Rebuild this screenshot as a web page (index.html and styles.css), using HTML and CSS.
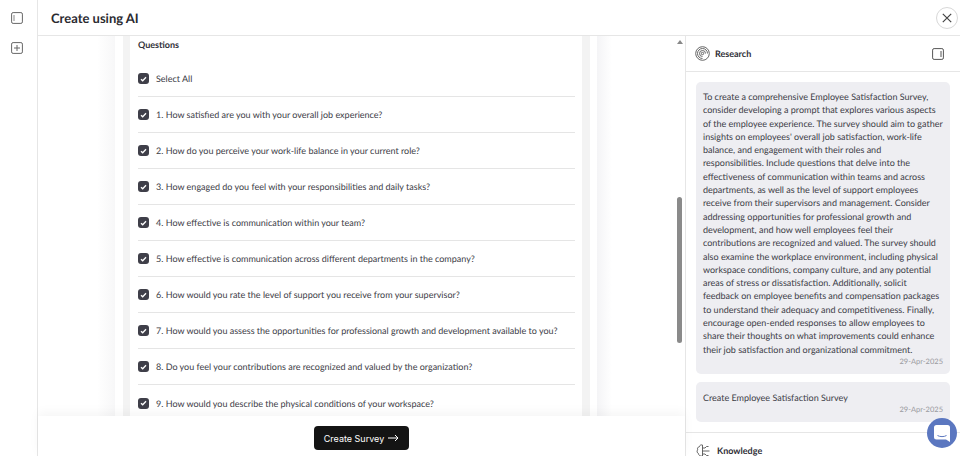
FILE: index.html
```html
<!DOCTYPE html>
<html lang="en">
<head>
<meta charset="utf-8">
<title>Create using AI</title>
<link rel="stylesheet" href="styles.css">
</head>
<body>
<div class="app">
  <aside class="rail">
    <button class="rail-btn"><svg width="12" height="12" viewBox="0 0 12 12"><rect x=".6" y=".6" width="10.8" height="10.8" rx="1.5" fill="none" stroke="#666" stroke-width="1"/><path d="M3 3v6" stroke="#888" stroke-width="1"/></svg></button>
    <button class="rail-btn"><svg width="12" height="12" viewBox="0 0 12 12"><rect x=".6" y=".6" width="10.8" height="10.8" rx="1.5" fill="none" stroke="#666" stroke-width="1"/><path d="M6 3v6M3 6h6" stroke="#666" stroke-width="1"/></svg></button>
  </aside>
  <div class="workspace">
    <header class="topbar">
      <h1 class="title">Create using AI</h1>
      <button class="close"><svg width="10" height="10" viewBox="0 0 10 10"><path d="M.8.8l8.400 8.400M9.200.8L.8 9.200" stroke="#444" stroke-width="1.200" fill="none"/></svg></button>
    </header>
    <div class="columns">
      <main class="main">
        <div class="scroller">
          <div class="edge-left"></div>
          <div class="band"></div>
          <section class="card">
            <h2 class="card-title">Questions</h2>
            <div class="row"><span class="check"><svg width="7" height="6" viewBox="0 0 7 6"><path d="M1 3.200l1.700 1.600L6 1.200" stroke="#fff" stroke-width="1.300" fill="none"/></svg></span><span>Select All</span></div>
            <div class="row"><span class="check"><svg width="7" height="6" viewBox="0 0 7 6"><path d="M1 3.200l1.700 1.600L6 1.200" stroke="#fff" stroke-width="1.300" fill="none"/></svg></span><span>1. How satisfied are you with your overall job experience?</span></div>
            <div class="row"><span class="check"><svg width="7" height="6" viewBox="0 0 7 6"><path d="M1 3.200l1.700 1.600L6 1.200" stroke="#fff" stroke-width="1.300" fill="none"/></svg></span><span>2. How do you perceive your work-life balance in your current role?</span></div>
            <div class="row"><span class="check"><svg width="7" height="6" viewBox="0 0 7 6"><path d="M1 3.200l1.700 1.600L6 1.200" stroke="#fff" stroke-width="1.300" fill="none"/></svg></span><span>3. How engaged do you feel with your responsibilities and daily tasks?</span></div>
            <div class="row"><span class="check"><svg width="7" height="6" viewBox="0 0 7 6"><path d="M1 3.200l1.700 1.600L6 1.200" stroke="#fff" stroke-width="1.300" fill="none"/></svg></span><span>4. How effective is communication within your team?</span></div>
            <div class="row"><span class="check"><svg width="7" height="6" viewBox="0 0 7 6"><path d="M1 3.200l1.700 1.600L6 1.200" stroke="#fff" stroke-width="1.300" fill="none"/></svg></span><span>5. How effective is communication across different departments in the company?</span></div>
            <div class="row"><span class="check"><svg width="7" height="6" viewBox="0 0 7 6"><path d="M1 3.200l1.700 1.600L6 1.200" stroke="#fff" stroke-width="1.300" fill="none"/></svg></span><span>6. How would you rate the level of support you receive from your supervisor?</span></div>
            <div class="row"><span class="check"><svg width="7" height="6" viewBox="0 0 7 6"><path d="M1 3.200l1.700 1.600L6 1.200" stroke="#fff" stroke-width="1.300" fill="none"/></svg></span><span>7. How would you assess the opportunities for professional growth and development available to you?</span></div>
            <div class="row"><span class="check"><svg width="7" height="6" viewBox="0 0 7 6"><path d="M1 3.200l1.700 1.600L6 1.200" stroke="#fff" stroke-width="1.300" fill="none"/></svg></span><span>8. Do you feel your contributions are recognized and valued by the organization?</span></div>
            <div class="row"><span class="check"><svg width="7" height="6" viewBox="0 0 7 6"><path d="M1 3.200l1.700 1.600L6 1.200" stroke="#fff" stroke-width="1.300" fill="none"/></svg></span><span>9. How would you describe the physical conditions of your workspace?</span></div>
          </section>
          <div class="band band-right"></div>
          <div class="edge-right"></div>
          <div class="scrollbar"><span class="arrow"></span><span class="thumb"></span></div>
        </div>
        <footer class="actions">
          <button class="primary">Create Survey <svg width="11" height="8" viewBox="0 0 11 8"><path d="M0 4h10M7 1l3 3-3 3" stroke="#fff" stroke-width="1" fill="none"/></svg></button>
        </footer>
      </main>
      <aside class="panel">
        <div class="panel-head">
          <div class="panel-label">
            <svg width="15" height="15" viewBox="0 0 15 15" fill="none" stroke="#555" stroke-width=".9"><circle cx="7.5" cy="7.500" r="6.800"/><path d="M7.500 12.500a5 5 0 1 1 5-5"/><path d="M7.500 10.500a3 3 0 1 1 3-3"/><circle cx="7.500" cy="7.500" r="1.200"/></svg>
            <span>Research</span>
          </div>
          <svg width="12" height="12" viewBox="0 0 12 12"><rect x=".6" y=".6" width="10.800" height="10.800" rx="1.500" fill="none" stroke="#555" stroke-width="1"/><path d="M9 3v6" stroke="#555" stroke-width="1"/></svg>
        </div>
        <div class="messages">
          <article class="bubble">
            <p>To create a comprehensive Employee Satisfaction Survey,<br>consider developing a prompt that explores various aspects<br>of the employee experience. The survey should aim to gather<br>insights on employees' overall job satisfaction, work-life<br>balance, and engagement with their roles and<br>responsibilities. Include questions that delve into the<br>effectiveness of communication within teams and across<br>departments, as well as the level of support employees<br>receive from their supervisors and management. Consider<br>addressing opportunities for professional growth and<br>development, and how well employees feel their<br>contributions are recognized and valued. The survey should<br>also examine the workplace environment, including physical<br>workspace conditions, company culture, and any potential<br>areas of stress or dissatisfaction. Additionally, solicit<br>feedback on employee benefits and compensation packages<br>to understand their adequacy and competitiveness. Finally,<br>encourage open-ended responses to allow employees to<br>share their thoughts on what improvements could enhance<br>their job satisfaction and organizational commitment.</p>
            <time>29-Apr-2025</time>
          </article>
          <article class="bubble">
            <p>Create Employee Satisfaction Survey</p>
            <time>29-Apr-2025</time>
          </article>
        </div>
        <div class="panel-foot">
          <svg width="15" height="14" viewBox="0 0 15 14" fill="none" stroke="#555" stroke-width=".9"><path d="M6.500 1C5 .6 3.500 1.300 3.300 2.800 1.800 3 1 4.500 1.700 5.800.6 7 1 9 2.400 9.400 2.500 11.200 4.500 12.800 6.500 12V1z"/><path d="M6.500 4H9l1.500-1.500h2M6.500 7h7M6.500 10H9l1.500 1.500h2"/></svg>
          <span>Knowledge</span>
        </div>
      </aside>
    </div>
  </div>
  <button class="chat"><svg width="16" height="17" viewBox="0 0 16 17"><path d="M2.500 0h11A2.500 2.500 0 0 1 16 2.500V17l-4-2.500H2.500A2.500 2.500 0 0 1 0 12V2.500A2.500 2.500 0 0 1 2.500 0z" fill="#fff"/><path d="M3.500 10.500c2.500 1.500 6.500 1.500 9 0" stroke="#5b77c0" stroke-width="1" fill="none"/></svg></button>
</div>
</body>
</html>
```
FILE: styles.css
```css
* { box-sizing: border-box; }
html, body { margin: 0; padding: 0; height: 100%; overflow: hidden; background: #fff; }
body { font-family: Lato, "Open Sans", sans-serif; color: #3a3a44; font-size: 9px; text-rendering: geometricPrecision; }
button { font: inherit; border: 0; background: none; padding: 0; }
.app { position: relative; display: flex; width: 960px; height: 456px; overflow: hidden; }
.rail { width: 38px; flex: none; border-right: 1px solid #e6e6e6; display: flex; flex-direction: column; align-items: center; padding: 12px 7px 0 3px; gap: 18px; }
.rail-btn { width: 12px; height: 12px; display: flex; }
.workspace { flex: 1; min-width: 0; display: flex; flex-direction: column; }
.topbar { height: 36px; flex: none; border-bottom: 1px solid #e6e6e6; display: flex; align-items: center; justify-content: space-between; padding: 0 2px 0 13px; }
.title { margin: 0; font-size: 13px; font-weight: 700; color: #2a2a30; }
.close { width: 22px; height: 22px; border: 1px solid #d8d8d8; border-radius: 50%; display: flex; align-items: center; justify-content: center; }
.columns { flex: 1; min-height: 0; display: flex; }
.main { width: 647px; flex: none; display: flex; flex-direction: column; }
.scroller { flex: 1; min-height: 0; display: flex; overflow: hidden; padding-left: 59px; }
.edge-left { width: 18px; flex: none; margin-right: 8px; background: linear-gradient(to right, #fff, #f7f7f8); }
.band { width: 7px; flex: none; background: #f3f3f3; }
.band-right { width: 8px; }
.card { width: 452px; flex: none; padding: 3px 7px 0 8px; background: #fff; }
.card-title { margin: 0; height: 22px; font-size: 9px; font-weight: 700; color: #2f2f37; line-height: 11px; }
.row { height: 36px; flex: none; display: flex; align-items: center; gap: 7px; border-bottom: 1px solid #e5e5e5; font-size: 9px; color: #3c3c46; }
.row:last-child { border-bottom: 0; }
.check { width: 11px; height: 11px; border-radius: 3px; background: #3f3f49; display: flex; align-items: center; justify-content: center; flex: none; }
.edge-right { width: 15px; flex: none; background: linear-gradient(to right, #f4f4f6, #fff); margin-left: 7px; }
.scrollbar { margin-left: 65px; width: 7px; position: relative; flex: none; }
.arrow { position: absolute; top: 4px; left: 0; width: 0; height: 0; border: 3px solid transparent; border-top: 0; border-bottom: 4px solid #888; }
.thumb { position: absolute; top: 161px; left: 0; width: 5px; height: 146px; background: #8a8a8a; border-radius: 3px; }
.actions { height: 40px; flex: none; background: #fff; box-shadow: 0 -4px 10px rgba(0,0,0,.04); display: flex; align-items: center; justify-content: center; position: relative; padding-top: 4px; }
.primary { width: 95px; height: 24px; border-radius: 4px; background: #141414; color: #fff; font-family: Inter, sans-serif; font-size: 9px; display: flex; align-items: center; justify-content: center; gap: 4px; }
.panel { flex: 1; min-width: 0; border-left: 1px solid #e6e6e6; display: flex; flex-direction: column; }
.panel-head { height: 36px; flex: none; border-bottom: 1px solid #e6e6e6; display: flex; align-items: center; justify-content: space-between; padding: 0 16px 0 9px; }
.panel-label { display: flex; align-items: center; gap: 5px; font-size: 9px; font-weight: 700; color: #2f2f37; }
.messages { flex: 1; min-height: 0; padding: 10px; display: flex; flex-direction: column; gap: 8px; }
.bubble { background: #eeeef2; border-radius: 5px; padding: 8px 7px; font-size: 9px; }
.bubble + .bubble { padding-top: 9px; }
.bubble p { margin: 0 0 1px; line-height: 13.3px; color: #3c3c46; white-space: nowrap; }
.bubble time { display: block; text-align: right; font-size: 7.5px; color: #9a9a9f; line-height: 9px; }
.panel-foot { height: 24px; flex: none; border-top: 1px solid #e6e6e6; display: flex; align-items: center; gap: 6px; padding: 12px 10px 0; font-size: 9px; font-weight: 700; color: #2f2f37; }
.chat { position: absolute; left: 927px; top: 418px; width: 30px; height: 30px; border-radius: 50%; background: #5b77c0; display: flex; align-items: center; justify-content: center; }
```
